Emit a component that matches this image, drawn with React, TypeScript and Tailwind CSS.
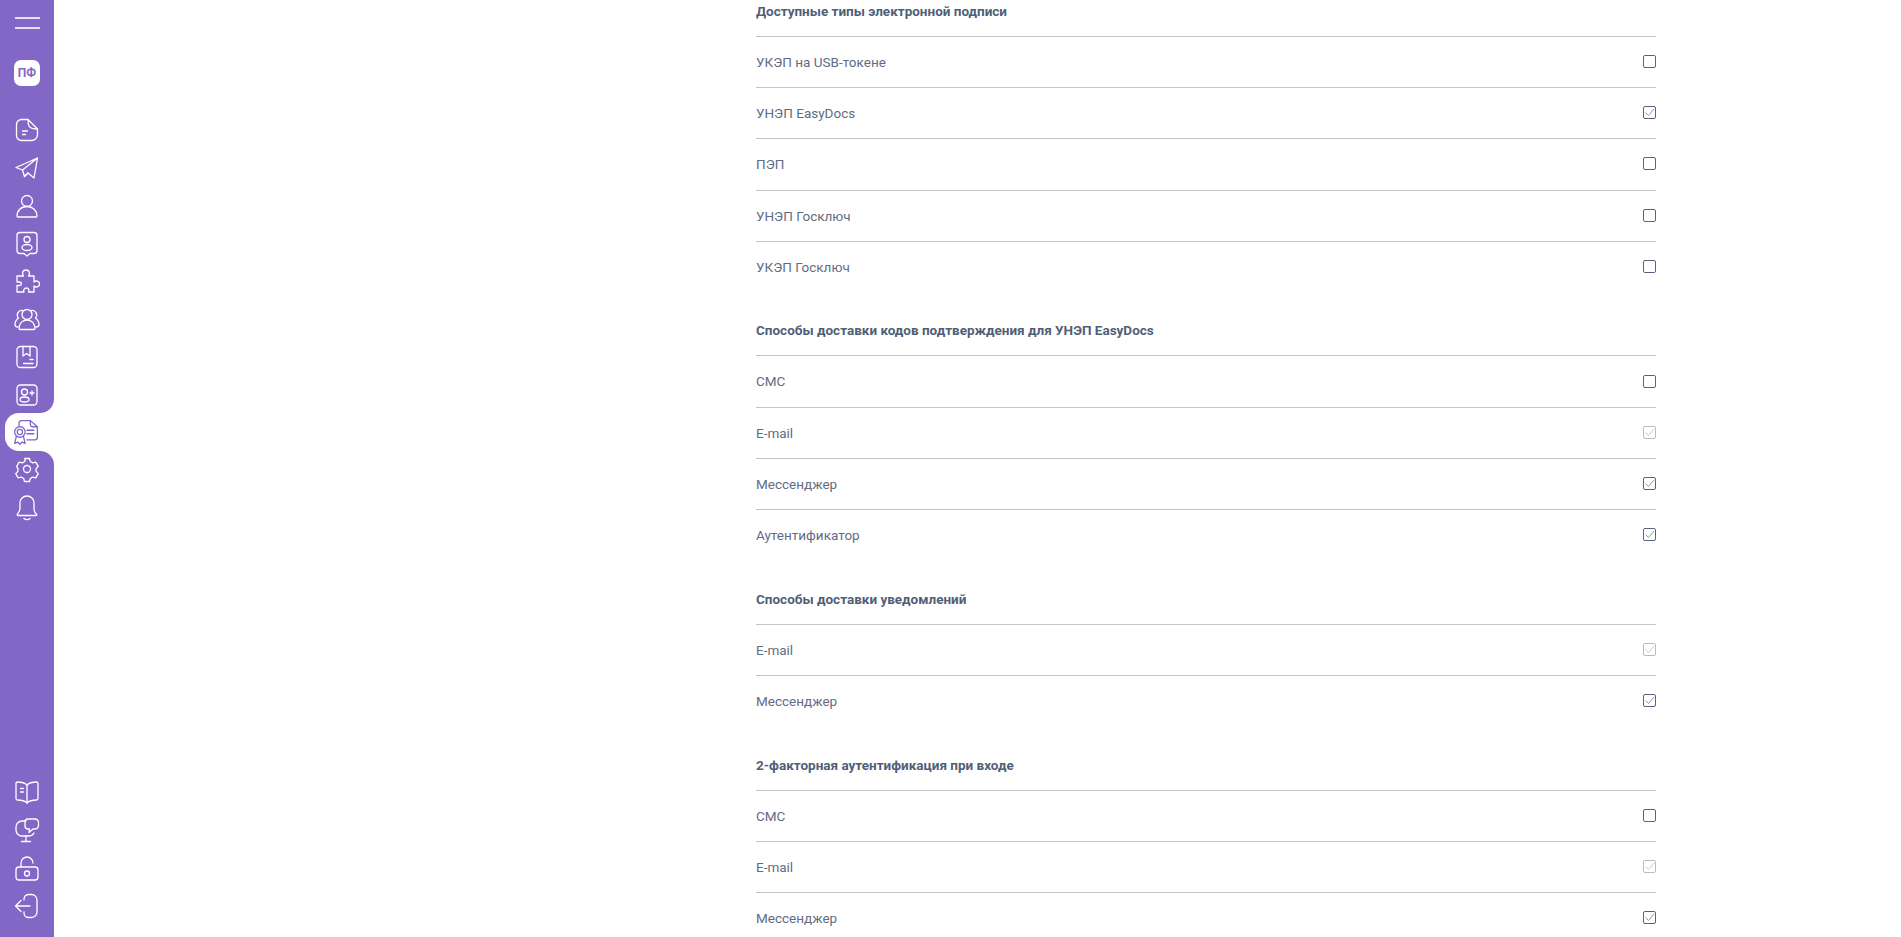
import type { ReactNode } from 'react';

const Ico = ({ children }: { children: ReactNode }) => (
  <svg
    width="28"
    height="28"
    viewBox="0 0 28 28"
    fill="none"
    stroke="currentColor"
    strokeWidth="1.3"
    strokeLinecap="round"
    strokeLinejoin="round"
  >
    {children}
  </svg>
);

const icons: ReactNode[] = [
  <>
    <path d="M15 3.500H8.500a5 5 0 0 0-5 5v11a5 5 0 0 0 5 5h10a6 6 0 0 0 6-6V13" />
    <path d="M15 3.500c0 3 0 4.500 1 6.500s3.500 3 8.500 3L15 3.500" />
    <path d="M9.500 15h5M9.500 18.500h3" />
  </>,
  <>
    <path d="M24.500 4 3 13.500l6.500 2.500L24.500 4l-3.500 20-6-5-3.500 3.500-2-6.500" />
    <path d="M15 19l-3.500 3.500" />
  </>,
  <>
    <circle cx="14" cy="9" r="5.500" />
    <path d="M4 24c0-5.500 4-9.500 10-9.500s10 4 10 9.500c0 .6-.4 1-1 1H5c-.6 0-1-.4-1-1z" />
  </>,
  <>
    <path d="M7 3.500h14a3 3 0 0 1 3 3v15a3 3 0 0 1-3 3h-4l-3 2.500-3-2.500H7a3 3 0 0 1-3-3v-15a3 3 0 0 1 3-3z" />
    <circle cx="14" cy="10.500" r="3" />
    <ellipse cx="14" cy="18.500" rx="5" ry="3" />
  </>,
  <>
    <path d="M4 9h6.500c-1.500-1.500-1.500-6 2.500-6s4 4.500 2.500 6H21v6c1.500-1.500 5.500-1.500 5.500 2s-4 3.500-5.500 2v6h-5.500c1-1.500.5-4-2-4s-3.500 2.500-2.500 4H4v-6.500h2.500c2.500 0 2.500-3.500 0-3.500H4V9z" />
  </>,
  <>
    <circle cx="14" cy="9.500" r="5" />
    <path d="M6 23.500c0-5 3.500-8.500 8-8.500s8 3.500 8 8.500c0 .6-.4 1-1 1H7c-.6 0-1-.4-1-1z" />
    <path d="M9.500 5.500A4.500 4.500 0 0 0 5.500 13C3.500 14.500 2 17 2 19.500c0 1.500 1 2.500 3 2.500" />
    <path d="M18.500 5.500A4.500 4.500 0 0 1 22.500 13c2 1.500 3.500 4 3.500 6.500 0 1.500-1 2.500-3 2.500" />
  </>,
  <>
    <rect x="4" y="3.500" width="20" height="21" rx="3.500" />
    <path d="M10 3.500v9.500l3.500-2.500L17 13V3.500" />
    <path d="M17 16.500h3M10.500 20.500h9.500" />
  </>,
  <>
    <rect x="4" y="4" width="20" height="20" rx="3.500" />
    <circle cx="11.500" cy="11" r="3" />
    <ellipse cx="11.500" cy="18.500" rx="4.500" ry="2.500" />
    <path d="M19 10v4M17 12h4" />
  </>,
];

const ActiveIcon = () => (
  <svg
    width="28"
    height="28"
    viewBox="0 0 32 32"
    fill="none"
    stroke="currentColor"
    strokeWidth="1.500"
    strokeLinecap="round"
    strokeLinejoin="round"
  >
    <path d="M8 9V6a3 3 0 0 1 3-3h10l8 7v12a3 3 0 0 1-3 3h-9" />
    <path d="M21 3v4a3 3 0 0 0 3 3h5" />
    <path d="M17 14h8M17 18h8" />
    <circle cx="9" cy="16" r="6" />
    <circle cx="9" cy="16" r="3" />
    <path d="M5 21l-2 8 3.500-1.500L9 30l2.500-2.500L15 29l-2-8" />
  </svg>
);

const afterIcons: ReactNode[] = [
  <>
    <circle cx="14" cy="14" r="3.500" />
    <path d="M11.500 3.500h5l.8 3 2.500 1.400 3-.8 2.500 4.300-2.200 2.200v2.800l2.200 2.200-2.500 4.300-3-.8-2.500 1.400-.8 3h-5l-.8-3-2.500-1.400-3 .8-2.500-4.300 2.200-2.200v-2.800L3.700 11.400l2.500-4.300 3 .8 2.500-1.400.8-3z" />
  </>,
  <>
    <path d="M14 3c-4 0-7 3-7 7v5c0 3-1 4.500-2.500 6-.6.7-.2 1.500.6 1.500h17.800c.8 0 1.200-.8.6-1.500C21 19.500 21 18 21 15v-5c0-4-3-7-7-7z" />
    <path d="M11 25.500c1.500 1.500 4.500 1.500 6 0" />
  </>,
];

const bottomIcons: ReactNode[] = [
  <>
    <path d="M14 7c-2-2-6-3-9.500-3C3.500 4 3 4.500 3 5.500v15c0 1 .5 1.500 1.500 1.500 3.500 0 7.500 1 9.500 3 2-2 6-3 9.500-3 1 0 1.500-.5 1.500-1.500v-15c0-1-.5-1.500-1.500-1.500C20 4 16 5 14 7z" />
    <path d="M14 7v18M7.500 10.500h3M7.500 14h3" />
  </>,
  <>
    <path d="M13 5H9a6 6 0 0 0-6 6v3a6 6 0 0 0 6 6h7a6 6 0 0 0 5-3" />
    <path d="M15 3h7a3.500 3.500 0 0 1 3.500 3.500v3A3.500 3.500 0 0 1 22 13h-2l-4 3.500 .5-3.500H15a3 3 0 0 1-3-3V6a3 3 0 0 1 3-3z" />
    <path d="M13 20v5M8.500 25.500h9" />
  </>,
  <>
    <rect x="3" y="13" width="22" height="13" rx="3" />
    <circle cx="14" cy="19.500" r="2.500" />
    <path d="M8 13V9a6 6 0 0 1 12 0" />
  </>,
  <>
    <path d="M11 8V7a4.500 4.500 0 0 1 4.500-4.500h3A5.500 5.500 0 0 1 24 8v12a5.500 5.500 0 0 1-5.500 5.500h-3A4.500 4.500 0 0 1 11 21v-1" />
    <path d="M17 14H3M8 8.500 2.500 14 8 19.500" />
  </>,
];

const Sidebar = () => (
  <aside className="w-[54px] shrink-0 h-full bg-[#8367c7] text-white flex flex-col items-center relative">
    <div className="mt-[17px] w-[25px] h-[12px] border-t-2 border-b-2 border-white/80" />
    <div className="mt-[31px] w-[26px] h-[26px] rounded-[7px] bg-white text-[#8367c7] flex items-center justify-center text-[12px] font-bold font-['Roboto',sans-serif]">
      ПФ
    </div>
    <div className="mt-[30px] flex flex-col items-center gap-[9.800px] w-full">
      {icons.map((ic, i) => (
        <div key={i} className="h-[28px] flex items-center justify-center">
          <Ico>{ic}</Ico>
        </div>
      ))}
    </div>
    <div className="relative mt-[4px] self-end w-[49px] h-[38px] pr-[8px] bg-white text-[#8367c7] rounded-l-[14px] flex items-center justify-center">
      <div className="absolute right-0 -top-[14px] w-[14px] h-[14px] bg-white">
        <div className="w-full h-full bg-[#8367c7] rounded-br-[14px]" />
      </div>
      <div className="absolute right-0 -bottom-[14px] w-[14px] h-[14px] bg-white">
        <div className="w-full h-full bg-[#8367c7] rounded-tr-[14px]" />
      </div>
      <ActiveIcon />
    </div>
    <div className="mt-[4px] flex flex-col items-center gap-[10px] w-full">
      {afterIcons.map((ic, i) => (
        <div key={i} className="h-[28px] flex items-center justify-center">
          <Ico>{ic}</Ico>
        </div>
      ))}
    </div>
    <div className="mt-auto mb-[17px] flex flex-col items-center gap-[10px] w-full">
      {bottomIcons.map((ic, i) => (
        <div key={i} className="h-[28px] flex items-center justify-center">
          <Ico>{ic}</Ico>
        </div>
      ))}
    </div>
  </aside>
);

type RowState = 'off' | 'on' | 'locked';

const Check = ({ state }: { state: RowState }) => (
  <span
    className={`w-[13px] h-[13px] mb-[1px] rounded-[2px] border flex items-center justify-center ${
      state === 'locked' ? 'border-[#b4bcc8]' : 'border-[#56657f]'
    }`}
  >
    {state !== 'off' && (
      <svg width="11" height="11" viewBox="0 0 11 11" fill="none">
        <path
          d="M1.500 5.500 4.500 8.500 10 2"
          stroke={state === 'locked' ? '#c3cad3' : '#8d98a9'}
          strokeWidth="1"
        />
      </svg>
    )}
  </span>
);

type Group = { title: string; rows: [string, RowState][] };

const groups: Group[] = [
  {
    title: 'Доступные типы электронной подписи',
    rows: [
      ['УКЭП на USB-токене', 'off'],
      ['УНЭП EasyDocs', 'on'],
      ['ПЭП', 'off'],
      ['УНЭП Госключ', 'off'],
      ['УКЭП Госключ', 'off'],
    ],
  },
  {
    title: 'Способы доставки кодов подтверждения для УНЭП EasyDocs',
    rows: [
      ['СМС', 'off'],
      ['E-mail', 'locked'],
      ['Мессенджер', 'on'],
      ['Аутентификатор', 'on'],
    ],
  },
  {
    title: 'Способы доставки уведомлений',
    rows: [
      ['E-mail', 'locked'],
      ['Мессенджер', 'on'],
    ],
  },
  {
    title: '2-факторная аутентификация при входе',
    rows: [
      ['СМС', 'off'],
      ['E-mail', 'locked'],
      ['Мессенджер', 'on'],
    ],
  },
];

const App = () => {
  return (
    <div className="h-[937px] w-[1901px] flex overflow-hidden bg-white font-['Roboto',sans-serif]">
      <Sidebar />
      <main className="flex-1 overflow-hidden">
        <div className="ml-[702px] w-[900px] -mt-[4px] flex flex-col gap-[23.500px]">
          {groups.map((g) => (
            <section key={g.title}>
              <h3 className="h-[30px] text-[13.500px] leading-[30px] font-bold text-[#505f78]">
                {g.title}
              </h3>
              <div className="mt-[10px]">
                {g.rows.map(([label, state]) => (
                  <div
                    key={label}
                    className="h-[51.200px] border-t border-[#bfc4cb] flex items-center justify-between text-[13.500px] text-[#5f6c84]"
                  >
                    <span>{label}</span>
                    <Check state={state} />
                  </div>
                ))}
              </div>
            </section>
          ))}
        </div>
      </main>
    </div>
  );
};

export default App;
